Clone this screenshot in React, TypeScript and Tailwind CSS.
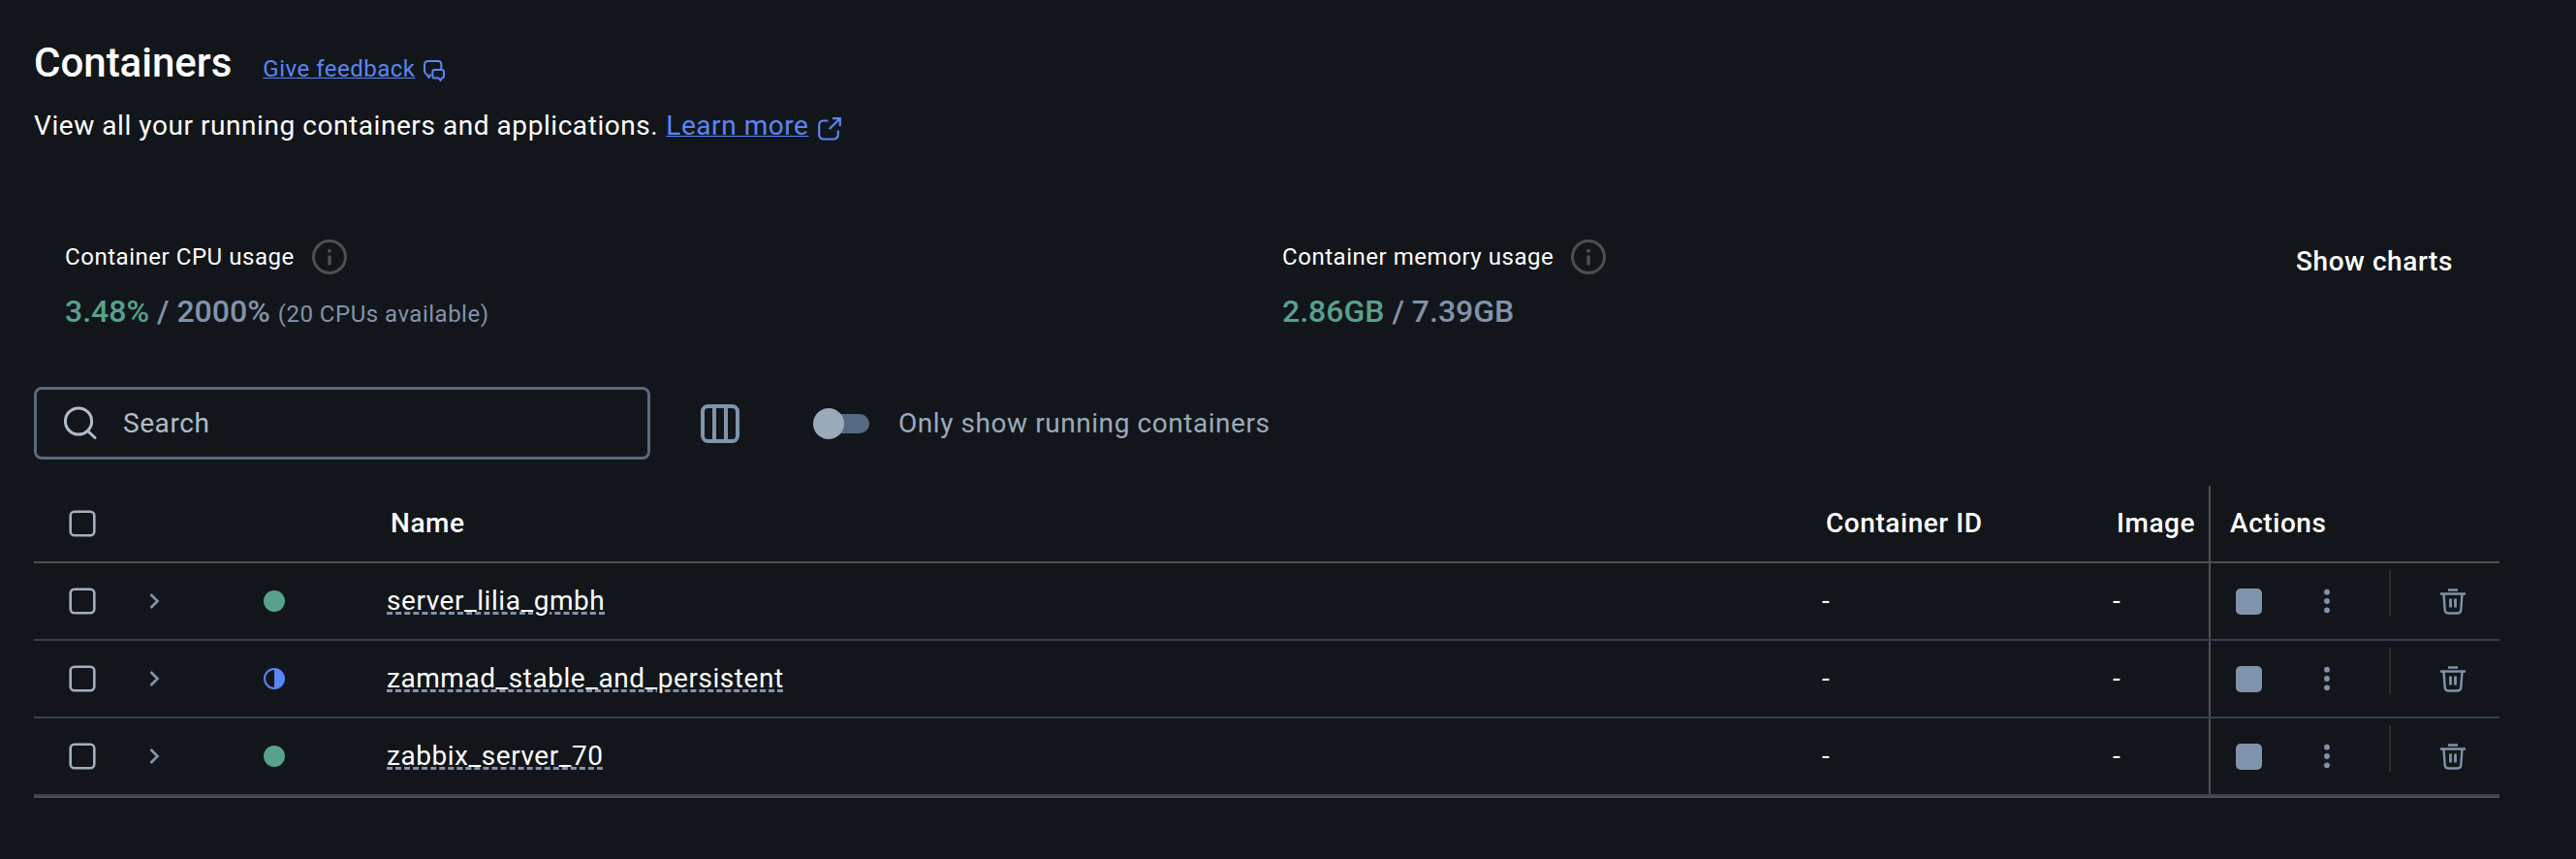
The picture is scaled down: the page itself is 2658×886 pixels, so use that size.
type Status = "running" | "partial";

const containers: { name: string; status: Status }[] = [
  { name: "server_lilia_gmbh", status: "running" },
  { name: "zammad_stable_and_persistent", status: "partial" },
  { name: "zabbix_server_70", status: "running" },
];

function FeedbackIcon() {
  return (
    <svg className="h-6 w-6 overflow-visible" viewBox="0 0 24 24" fill="none" stroke="currentColor" strokeWidth="2" strokeLinejoin="round">
      <path d="M8.500 17.500 6.500 21l-2-3.200C2.800 17 2 15.500 2 13.500V8c0-2.700 1.300-4 4-4h10c2.200 0 3.300 1.100 3.300 3.300V13" />
      <path d="M12.500 13h7.300c1.500 0 2.200.7 2.200 2.200v4c0 1.500-.7 2.200-2.200 2.200L18.500 24l-2-2.600h-4c-1.500 0-2.200-.7-2.200-2.200v-4c0-1.500.7-2.200 2.200-2.200Z" />
    </svg>
  );
}

function ExternalIcon() {
  return (
    <svg className="h-6 w-6" viewBox="0 0 24 24" fill="none" stroke="currentColor" strokeWidth="2.200">
      <path d="M10.500 3.500H6C3 3.500 1.200 5 1.200 8v9.500c0 3.500 1.500 5 5 5h9.600c3.500 0 5-1.500 5-5V13.500" />
      <path d="M15 1.200h7.800V9M22.500 1.500 11.800 12" />
    </svg>
  );
}

function InfoIcon() {
  return (
    <svg className="h-9 w-9 text-[#4b4f52]" viewBox="0 0 36 36" fill="none" stroke="currentColor" strokeWidth="3">
      <circle cx="18" cy="18" r="16.500" />
      <path d="M18 18v7" strokeWidth="3.600" strokeLinecap="round" />
      <circle cx="18" cy="11.700" r="2" fill="currentColor" stroke="none" />
    </svg>
  );
}

function SearchIcon() {
  return (
    <svg className="h-[35px] w-[35px] text-[#b0bcc8]" viewBox="0 0 35 35" fill="none" stroke="currentColor" strokeWidth="3">
      <circle cx="15" cy="15.500" r="13.600" />
      <path d="m24.500 25.500 7.500 7" strokeLinecap="round" />
    </svg>
  );
}

function ColumnsIcon() {
  return (
    <svg className="h-10 w-10 text-[#8193ab]" viewBox="0 0 40 40" fill="none" stroke="currentColor" strokeWidth="4">
      <rect x="2" y="2" width="36" height="36" rx="5.500" />
      <path d="M14 3v34M26 3v34" />
    </svg>
  );
}

function Checkbox() {
  return (
    <svg className="h-7 w-7 text-[#a0b0c0]" viewBox="0 0 28 28" fill="none" stroke="currentColor" strokeWidth="2.600">
      <rect x="1.700" y="1.700" width="24.600" height="24.600" rx="4" />
    </svg>
  );
}

function ChevronIcon() {
  return (
    <svg className="h-4 w-[11px] text-[#8193ab]" viewBox="0 0 11 16" fill="none" stroke="currentColor" strokeWidth="2.700">
      <path d="m1.500 1 7 7-7 7" />
    </svg>
  );
}

function StatusIcon({ status }: { status: Status }) {
  return status === "running" ? (
    <span className="block h-[22px] w-[22px] rounded-full bg-[#58a18c]" />
  ) : (
    <svg className="h-[22px] w-[22px] text-[#5a86f5]" viewBox="0 0 22 22">
      <circle cx="11" cy="11" r="10" fill="none" stroke="currentColor" strokeWidth="2" />
      <path d="M11 1a10 10 0 0 1 0 20Z" fill="currentColor" />
    </svg>
  );
}

function DotsIcon() {
  return (
    <svg className="h-[26px] w-1.5" viewBox="0 0 6 26" fill="currentColor">
      <circle cx="3" cy="3.700" r="2.900" />
      <circle cx="3" cy="13" r="2.900" />
      <circle cx="3" cy="22.300" r="2.900" />
    </svg>
  );
}

function TrashIcon() {
  return (
    <svg className="h-[27px] w-[26px]" viewBox="0 0 26 27" fill="none" stroke="currentColor" strokeWidth="2.400">
      <path d="M8 1.500h10M0 5.500h26" />
      <path d="M3.500 5.500 4.700 22c.2 2.300 1.300 3.500 3.300 3.500h10c2 0 3.100-1.200 3.300-3.500l1.200-16.500" />
      <path d="M10.500 10.500v9M15.500 10.500v9" strokeWidth="2.800" />
    </svg>
  );
}

function Usage({ label, used, total, note }: { label: string; used: string; total: string; note?: string }) {
  return (
    <div className="w-[1256px]">
      <div className="flex h-9 items-center gap-[18px]">
        <span className="text-[24px] tracking-[0.54px]">{label}</span>
        <InfoIcon />
      </div>
      <div className="mt-[18px] h-10 text-[32px] leading-[40px] font-medium text-[#8193ab]">
        <span className="text-[#58a18c]">{used}</span> / {total}
        {note && <span className="ml-2 text-[24px] leading-none font-normal tracking-[0.5px]">{note}</span>}
      </div>
    </div>
  );
}

export default function App() {
  return (
    <main className="h-[886px] w-[2658px] overflow-hidden bg-[#12161a] pl-[35px] font-['Roboto',sans-serif] text-[28px] text-white">
      <header className="pt-[40px]">
        <div className="flex h-[50px] items-baseline">
          <h1 className="text-[42px] leading-[50px] font-medium">Containers</h1>
          <a className="ml-[32px] flex items-center gap-2 text-[24px] leading-7 tracking-[0.5px] text-[#5a86f5]">
            <span className="underline decoration-1 underline-offset-1">Give feedback</span>
            <FeedbackIcon />
          </a>
        </div>
        <p className="mt-[20px] flex h-10 items-center tracking-[0.56px]">
          <span>View all your running containers and applications.</span>
          <a className="ml-2 flex items-center gap-[9px] text-[#5a86f5]">
            <span className="underline decoration-1 underline-offset-1">Learn more</span>
            <span className="mt-1.5">
              <ExternalIcon />
            </span>
          </a>
        </p>
      </header>

      <section className="mt-[97px] flex pl-8">
        <Usage label="Container CPU usage" used="3.48%" total="2000%" note="(20 CPUs available)" />
        <Usage label="Container memory usage" used="2.86GB" total="7.39GB" />
        <button className="ml-[-210px] h-[46px] font-medium tracking-[0.56px]">Show charts</button>
      </section>

      <section className="mt-[58px] flex h-[75px] items-center">
        <div className="flex h-[75px] w-[636px] items-center rounded-[8px] border-[3px] border-[#566980] pl-[28px] tracking-[0.56px] text-[#b0bcc8]">
          <SearchIcon />
          <span className="ml-[26px]">Search</span>
        </div>
        <button className="ml-[52px]">
          <ColumnsIcon />
        </button>
        <div className="ml-[76px] flex h-8 w-[58px] items-center">
          <span className="z-10 h-8 w-8 shrink-0 rounded-full bg-[#9aaaba]" />
          <span className="-ml-4 h-5 w-[42px] rounded-r-full bg-[#566980]" />
        </div>
        <span className="ml-[30px] tracking-[0.56px] text-[#9aaaba]">Only show running containers</span>
      </section>

      <section className="mt-[27px] w-[2544px] border-b-2 border-[#4f4f4f]">
        <div className="flex h-20 border-b-2 border-[#4f4f4f] font-medium tracking-[0.56px]">
          <div className="flex w-[368px] items-center pl-[36px]">
            <Checkbox />
          </div>
          <div className="flex w-[1481px] items-center">Name</div>
          <div className="flex w-[300px] items-center">Container ID</div>
          <div className="flex w-[95px] items-center">Image</div>
          <div className="flex grow items-center border-l-2 border-[#4f4f4f] pl-5">Actions</div>
        </div>
        {containers.map(({ name, status }) => (
          <div key={name} className="flex h-20 border-b-2 border-[#33414f]">
            <div className="flex w-[364px] items-center pl-[36px]">
              <Checkbox />
              <span className="ml-[55px]">
                <ChevronIcon />
              </span>
              <span className="ml-[107px]">
                <StatusIcon status={status} />
              </span>
            </div>
            <div className="flex w-[1481px] items-center">
              <span className="tracking-[0.55px] underline decoration-[#8193ab] decoration-dashed decoration-3 underline-offset-2">
                {name}
              </span>
            </div>
            <div className="flex w-[300px] items-center">-</div>
            <div className="flex w-[99px] items-center">-</div>
            <div className="flex grow items-center border-l-2 border-[#4f4f4f] pl-[26px] text-[#8193ab]">
              <span className="h-[27px] w-[27px] rounded-[5px] bg-[#8193ab]" />
              <span className="ml-[64px]">
                <DotsIcon />
              </span>
              <span className="mb-[16px] ml-[61px] h-12 w-0.5 bg-[#2b2e31]" />
              <span className="ml-[51px]">
                <TrashIcon />
              </span>
            </div>
          </div>
        ))}
      </section>
    </main>
  );
}
